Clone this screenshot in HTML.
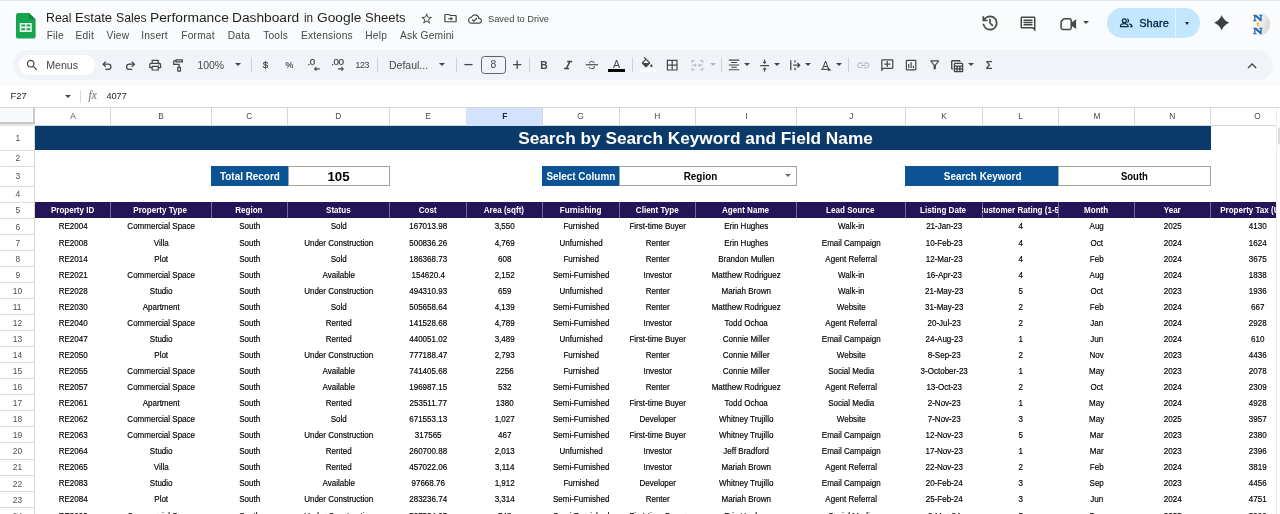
<!DOCTYPE html>
<html><head><meta charset="utf-8"><title>Real Estate Sales Performance Dashboard in Google Sheets</title>
<style>
*{box-sizing:border-box;margin:0;padding:0}
html,body{width:1280px;height:514px;overflow:hidden;background:#fff}
body{font-family:"Liberation Sans",sans-serif;color:#1f1f1f;-webkit-font-smoothing:antialiased}
#app{will-change:transform;position:relative;width:1280px;height:514px;overflow:hidden;background:#fff}
.abs{position:absolute}
svg{position:absolute;overflow:visible}
/* ---- header ---- */
#hdr{position:absolute;left:0;top:0;width:1280px;height:86px;background:#f9fbfd}
#topline{position:absolute;left:0;top:0;width:1280px;height:1px;background:#e5e6e8}
#title{position:absolute;left:46.200px;top:9.300px;width:370px;height:17px;font-size:13.700px;line-height:17px;color:#1f1f1f;white-space:nowrap}
#title span{position:absolute;top:0;transform-origin:0 50%}
.menu{position:absolute;top:29.500px;font-size:10.200px;line-height:12px;color:#444746;white-space:nowrap;letter-spacing:.2px}
#saved{position:absolute;left:488px;top:12.800px;font-size:9.3px;line-height:12px;color:#444746;white-space:nowrap}
#share{position:absolute;left:1107px;top:8px;width:93px;height:30px;border-radius:15px;background:#c2e7ff}
#share .div{position:absolute;left:68px;top:0;width:1px;height:30px;background:#e3f3ff}
#share .t{position:absolute;left:32.200px;top:9.200px;font-size:11px;line-height:12px;font-weight:400;color:#0a2a47;-webkit-text-stroke:.35px #0a2a47;letter-spacing:.1px}
#avatar{position:absolute;left:1246.200px;top:11.800px;width:23.800px;height:23.800px;border-radius:50%;background:linear-gradient(100deg,#ffffff 0%,#fbfbfb 45%,#e4e4e4 75%,#d2d2d2 100%);overflow:hidden}
#avatar span{-webkit-text-stroke:.3px #1b68b3;position:absolute;left:0;width:23.800px;text-align:center;font-family:"Liberation Serif",serif;font-weight:700;color:#1b68b3}
/* ---- toolbar ---- */
#tb{position:absolute;left:13px;top:50px;width:1259.5px;height:29.5px;border-radius:15px;background:#f0f4f9}
#menus{position:absolute;left:18.5px;top:54.5px;width:76px;height:20.5px;border-radius:10.5px;background:#fff}
.tbt{position:absolute;font-size:10.5px;line-height:12px;color:#444746;white-space:nowrap}
.sep{position:absolute;top:57px;width:1px;height:15px;background:#cfd2d7}
.caret{position:absolute;width:0;height:0;border-left:3.4px solid transparent;border-right:3.4px solid transparent;border-top:3.6px solid #444746;margin-left:-.5px;margin-top:-.1px}
.caret.g{border-top-color:#b5b8bd}
#fsize{position:absolute;left:480.5px;top:55.5px;width:25.5px;height:18px;border:1px solid #5f6368;border-radius:3.5px;font-size:10.3px;line-height:16px;text-align:center;color:#444746}
/* ---- formula bar ---- */
#fb{position:absolute;left:0;top:85.800px;width:1280px;height:21.700px;background:#fff}
#fb .t{position:absolute;font-size:9.3px;line-height:12px;color:#1f1f1f;white-space:nowrap}
/* ---- grid ---- */
#grid{position:absolute;left:0;top:0;width:1280px;height:514px}
.colhdr-row{position:absolute;left:0;top:107px;width:1280px;height:18.5px;background:#fff;border-top:1px solid #d5d7da;border-bottom:1px solid #d5d7da}
.ch{position:absolute;top:108px;height:17px;line-height:16.2px;font-size:9.3px;color:#45494e;text-align:center}
.ch span{display:inline-block;transform:scaleX(.9);position:relative;left:.6px}
.vl{position:absolute;top:108px;width:1px;height:17px;background:#d5d7da}
.ch.sel{background:#d3e3fd;color:#1f2a3a;font-weight:700;height:18px;z-index:2}
.corner{position:absolute;left:0;top:108px;width:34.600px;height:16.100px;background:#f8f9fa;border-right:2.700px solid #c8c9ca;border-bottom:2.100px solid #c6c7c8}
.corner2{position:absolute;left:0;top:124.100px;width:34.600px;height:1.500px;background:#e6e7e8}
.rh{position:absolute;left:0;width:34.5px;font-size:9.800px;color:#4b5055;text-align:center}
.rh span{display:inline-block;transform:scaleX(.86)}
.hl{position:absolute;left:0;width:35px;height:1px;background:#dadcdf}
.rvl{position:absolute;left:34px;top:125px;width:1px;height:389px;background:#d5d7da}
.band{position:absolute;background:#0a3a69}
.bandtxt{position:absolute;color:#fff;font-weight:700;font-size:17.25px;text-align:center;white-space:nowrap}
.lab{position:absolute;top:165.7px;height:20.3px;line-height:20.35px;background:#0b5394;color:#fff;font-weight:700;font-size:10.9px;text-align:center;white-space:nowrap}
.box{position:absolute;top:165.7px;height:20.3px;line-height:18.35px;background:#fff;border:1px solid #a0a897;color:#000;font-weight:700;font-size:10.9px;text-align:center;white-space:nowrap}
.box.big{font-size:13.3px;line-height:19.05px}
.sx{display:inline-block;transform:scaleX(.91)}
.lab .sx{position:relative;left:.9px}
.dd{position:absolute;right:4.300px;top:7.300px;width:0;height:0;border-left:3.200px solid transparent;border-right:3.200px solid transparent;border-top:3.500px solid #6b6f74}
.thead{position:absolute;background:#241458}
.th{position:absolute;top:202px;height:16px;line-height:16.53px;color:#fff;font-weight:700;font-size:8.75px;overflow:hidden;white-space:nowrap;display:flex;justify-content:center}
.tvl{position:absolute;top:202.300px;width:1px;height:15.700px;background:rgba(255,255,255,.36)}
.th span{flex:none;transform:scaleX(.92)}
.td{position:absolute;height:16px;line-height:17.25px;color:#000;font-size:9.3px;transform:translateX(.7px) scaleX(.862);-webkit-text-stroke:.18px #000;text-align:center;white-space:nowrap;overflow:visible}
.vscroll{position:absolute;left:1275.500px;top:108px;width:4.500px;height:406px;background:#fff;border-left:1px solid #e9ebed}
.vscroll .thumb{position:absolute;left:1.400px;top:19px;width:6px;height:17.500px;border-radius:3px;background:#dadce0}

</style></head><body>
<div id="app">
<div id="hdr">
<div id="topline"></div>
<!-- sheets logo -->
<svg style="left:16.300px;top:12.700px" width="19.600" height="25.600" viewBox="0 0 19.600 25.600">
<path d="M2.200 0 H13 L19.600 6.600 V23.400 a2.200 2.200 0 0 1 -2.200 2.200 H2.200 a2.200 2.200 0 0 1 -2.200 -2.200 V2.200 a2.200 2.200 0 0 1 2.200 -2.200z" fill="#17a44f"/>
<path d="M13 0 L19.600 6.600 H14.600 a1.600 1.600 0 0 1 -1.600 -1.600z" fill="#0c8a40"/>
<path d="M3.700 10 h12.100 v8.900 h-12.100z M5.300 11.600 v2 h3.700 v-2z M10.500 11.600 v2 h3.800 v-2z M5.300 15.200 v2 h3.700 v-2z M10.500 15.200 v2 h3.800 v-2z" fill="#e9f9ee" fill-rule="evenodd"/>
</svg>
<div id="title"><span style="left:-0.40px;transform:scaleX(0.904)">Real</span><span style="left:28.44px;transform:scaleX(0.957)">Estate</span><span style="left:69.50px;transform:scaleX(0.898)">Sales</span><span style="left:103.79px;transform:scaleX(1.006)">Performance</span><span style="left:186.00px;transform:scaleX(1.004)">Dashboard</span><span style="left:257.50px;transform:scaleX(0.856)">in</span><span style="left:270.80px;transform:scaleX(1.006)">Google</span><span style="left:319.10px;transform:scaleX(0.954)">Sheets</span></div>
<!-- star -->
<svg style="left:420px;top:12px" width="13.300" height="13.300" viewBox="0 0 24 24"><path fill="#444746" d="M22 9.240l-7.190-.620L12 2 9.190 8.630 2 9.240l5.460 4.730L5.820 21 12 17.270 18.180 21l-1.630-7.030L22 9.240zM12 15.400l-3.760 2.270 1-4.280-3.320-2.880 4.380-.380L12 6.100l1.710 4.040 4.380.380-3.320 2.880 1 4.280L12 15.400z"/></svg>
<!-- folder move -->
<svg style="left:443px;top:12.150px" width="15" height="12.300" viewBox="0 0 24 24" preserveAspectRatio="none"><path fill="#444746" d="M20 6h-8l-2-2H4c-1.100 0-2 .900-2 2v12c0 1.100.900 2 2 2h16c1.100 0 2-.900 2-2V8c0-1.100-.900-2-2-2zm0 12H4V6h5.170l2 2H20v10zm-7.990-1L16 13l-3.990-4v3H8v2h4.010v3z"/></svg>
<!-- cloud done -->
<svg style="left:468px;top:11.7px" width="14" height="14" viewBox="0 0 24 24"><path fill="#444746" d="M19.350 10.040C18.670 6.590 15.640 4 12 4 9.110 4 6.600 5.640 5.350 8.040 2.340 8.360 0 10.910 0 14c0 3.310 2.690 6 6 6h13c2.760 0 5-2.240 5-5 0-2.640-2.050-4.780-4.650-4.960zM19 18H6c-2.210 0-4-1.790-4-4 0-2.050 1.530-3.760 3.560-3.970l1.070-.110.500-.950C8.080 7.140 9.940 6 12 6c2.620 0 4.880 1.860 5.390 4.430l.300 1.500 1.530.110c1.560.100 2.780 1.410 2.780 2.960 0 1.650-1.350 3-3 3zm-9-3.820l-2.090-2.090L6.500 13.500 10 17l6.010-6.010-1.410-1.410z"/></svg>
<div id="saved">Saved to Drive</div>
<!-- menus -->
<div class="menu" style="left:46.7px">File</div>
<div class="menu" style="left:75.6px">Edit</div>
<div class="menu" style="left:106.6px">View</div>
<div class="menu" style="left:141.2px">Insert</div>
<div class="menu" style="left:181.3px">Format</div>
<div class="menu" style="left:227.8px">Data</div>
<div class="menu" style="left:263.2px">Tools</div>
<div class="menu" style="left:301px">Extensions</div>
<div class="menu" style="left:365.3px">Help</div>
<div class="menu" style="left:400px">Ask Gemini</div>
<!-- history -->
<svg style="left:980.200px;top:12.800px" width="20" height="20" viewBox="0 -960 960 960"><path fill="#444746" d="M480-120q-138 0-240.500-91.500T122-440h82q14 104 92.500 172T480-200q117 0 198.500-81.500T760-480q0-117-81.500-198.500T480-760q-69 0-129 32t-101 88h110v80H120v-240h80v94q51-64 124.500-99T480-840q75 0 140.500 28.500t114 77q48.500 48.500 77 114T840-480q0 75-28.500 140.500t-77 114q-48.500 48.500-114 77T480-120Zm112-192L440-464v-216h80v184l128 128-56 56Z"/></svg>
<!-- comment -->
<svg style="left:1018.700px;top:14.500px" width="18" height="18" viewBox="0 0 24 24"><path fill="#444746" d="M21.990 4c0-1.100-.890-2-1.990-2H4c-1.100 0-2 .900-2 2v12c0 1.100.900 2 2 2h14l4 4-.010-18zM20 4v13.170L18.830 16H4V4h16zM6 12h12v2H6zm0-3h12v2H6zm0-3h12v2H6z"/></svg>
<!-- video -->
<svg style="left:1058px;top:16px" width="20" height="16" viewBox="1058 16 20 16"><path d="M1063.900 18.800 H1069.500 a1.700 1.700 0 0 1 1.700 1.700 V27.700 a1.700 1.700 0 0 1 -1.700 1.700 H1062.800 a1.700 1.700 0 0 1 -1.700 -1.700 V21.600z" fill="none" stroke="#444746" stroke-width="1.500" stroke-linejoin="round"/><path d="M1071.600 22.400 L1076.100 19.300 V28.900 L1071.600 25.800z" fill="#444746"/></svg>
<div class="caret" style="left:1083.900px;top:21.300px;border-left-width:3px;border-right-width:3px;border-top-width:3.300px"></div>
<!-- share -->
<div id="share"><div class="div"></div>
<svg style="left:11px;top:8px" width="16" height="14" viewBox="1118 16 16 14"><g fill="none" stroke="#0a2a47" stroke-width="1.250"><circle cx="1124.300" cy="20.700" r="1.950"/><path d="M1120.500 26.700 V25.900 C1120.500 24.200 1123 23.500 1124.300 23.500 S1128.100 24.200 1128.100 25.900 V26.700z" stroke-linejoin="round"/><path d="M1127.300 18.900 A1.950 1.950 0 0 1 1127.300 22.500"/><path d="M1129.300 23.800 C1130.700 24.200 1131.900 24.900 1131.900 25.900 V26.700 H1130.200"/></g></svg>
<div class="t">Share</div>
<div class="caret" style="left:78.700px;top:14.300px;border-top-color:#0a2a47;border-left-width:2.900px;border-right-width:2.900px;border-top-width:3.200px"></div>
</div>
<!-- gemini spark -->
<svg style="left:1213.800px;top:15.400px" width="15.400" height="15.400" viewBox="0 0 24 24"><path fill="#3c4043" d="M12 0 C13.500 5 19 10.500 24 12 C19 13.500 13.500 19 12 24 C10.500 19 5 13.500 0 12 C5 10.500 10.500 5 12 0Z"/></svg>
<!-- avatar -->
<div id="avatar"><span style="top:1.800px;font-size:8.600px;line-height:9px;transform:scaleX(1.550)">N</span><span style="top:9px;font-size:6px;line-height:6px;color:#f4b400;-webkit-text-stroke:.3px #f4b400;transform:scaleX(1.300)">t</span><span style="top:14.800px;font-size:8.600px;line-height:9px;transform:scaleX(1.550)">N</span></div>
</div>

<div id="tb"></div>
<div id="menus"></div>
<!-- search -->
<svg style="left:24.9px;top:58.3px" width="14.4" height="14.4" viewBox="0 0 24 24"><path fill="#444746" d="M15.5 14h-.79l-.28-.27C15.41 12.59 16 11.11 16 9.5 16 5.91 13.09 3 9.5 3S3 5.91 3 9.5 5.91 16 9.5 16c1.61 0 3.09-.59 4.23-1.57l.27.28v.79l5 4.99L20.49 19l-4.990-5zm-6 0C7.01 14 5 11.99 5 9.500S7.01 5 9.5 5 14 7.01 14 9.500 11.99 14 9.500 14z"/></svg>
<div class="tbt" style="left:46.2px;top:58.9px;font-size:10.600px">Menus</div>
<!-- undo / redo -->
<svg style="left:100px;top:58px" width="16" height="14" viewBox="100 58 16 14"><path d="M105.700 61.600 L103.100 64.200 L105.700 66.800 M103.300 64.200 H108.300 A2.600 2.600 0 0 1 108.300 69.400 H105.200" fill="none" stroke="#444746" stroke-width="1.250" stroke-linejoin="miter"/></svg>
<svg style="left:122px;top:58px" width="16" height="14" viewBox="122 58 16 14"><path d="M131.800 61.600 L134.400 64.200 L131.800 66.800 M134.200 64.200 H129.200 A2.600 2.600 0 0 0 129.200 69.400 H132.300" fill="none" stroke="#444746" stroke-width="1.250" stroke-linejoin="miter"/></svg>
<!-- print -->
<svg style="left:147.700px;top:58.300px" width="14.400" height="14.400" viewBox="0 0 24 24"><path fill="#444746" d="M19 8h-1V3H6v5H5c-1.660 0-3 1.340-3 3v6h4v4h12v-4h4v-6c0-1.660-1.340-3-3-3zM8 5h8v3H8V5zm8 14H8v-4h8v4zm2-4v-2H6v2H4v-4c0-.550.450-1 1-1h14c.550 0 1 .450 1 1v4h-2z"/><circle cx="18" cy="11.500" r="1" fill="#444746"/></svg>
<!-- paint format -->
<svg style="left:170px;top:56px" width="16" height="18" viewBox="170 56 16 18"><path d="M176 59.900 H182.400 V61.900 H176z M175.600 60.900 H173.700 V64.400 H179.100 V67.300 M177.800 67.400 H180.400 V71.100 H177.800z" fill="none" stroke="#444746" stroke-width="1.250" stroke-linejoin="round"/></svg>
<div class="tbt" style="left:197.400px;top:59.900px;font-size:10.450px">100%</div>
<div class="caret" style="left:235.400px;top:63.300px"></div>
<div class="sep" style="left:251px"></div>
<div class="tbt" style="left:262.800px;top:58.800px;font-size:9.800px;-webkit-text-stroke:.25px #444746">$</div>
<div class="tbt" style="left:285.300px;top:58.700px;font-size:9.800px;-webkit-text-stroke:.2px #444746;transform:scaleX(.9)">%</div>
<!-- .0 <- -->
<div class="tbt" style="left:307.400px;top:56.400px;font-size:9.800px;letter-spacing:-.3px;-webkit-text-stroke:.25px #444746">.0</div>
<svg style="left:313px;top:66px" width="8" height="6" viewBox="313 66 8 6"><path d="M319.800 68.900 H314.600 M316.400 67.100 L314.600 68.900 L316.400 70.700" fill="none" stroke="#444746" stroke-width="1.100"/></svg>
<!-- .00 -> -->
<div class="tbt" style="left:331.200px;top:56.400px;font-size:9.800px;letter-spacing:-.4px;-webkit-text-stroke:.25px #444746">.00</div>
<svg style="left:337px;top:66px" width="8" height="6" viewBox="337 66 8 6"><path d="M338 68.900 H343.200 M341.400 67.100 L343.200 68.900 L341.400 70.700" fill="none" stroke="#444746" stroke-width="1.100"/></svg>
<div class="tbt" style="left:355.300px;top:59.100px;font-size:9.400px;letter-spacing:-.75px">123</div>
<div class="sep" style="left:377px"></div>
<div class="tbt" style="left:389px;top:58.900px;font-size:10.500px">Defaul...</div>
<div class="caret" style="left:439.200px;top:63.300px"></div>
<div class="sep" style="left:456px"></div>
<!-- minus / size / plus -->
<svg style="left:462px;top:58px" width="14" height="14" viewBox="462 58 14 14"><path d="M464.400 64.600 H472.500" stroke="#444746" stroke-width="1.300" fill="none"/></svg>
<div id="fsize">8</div>
<svg style="left:510px;top:58px" width="14" height="14" viewBox="510 58 14 14"><path d="M513.100 64.600 H521.300 M517.200 60.500 V68.700" stroke="#444746" stroke-width="1.300" fill="none"/></svg>
<div class="sep" style="left:529px"></div>
<!-- B I S A -->
<div class="tbt" style="left:540.300px;top:59.700px;font-size:10.300px;font-weight:700">B</div>
<svg style="left:562px;top:58px" width="14" height="14" viewBox="562 58 14 14"><path d="M567.200 61.600 H572.200 M564 68.400 H569 M569.900 61.600 L566.400 68.400" stroke="#444746" stroke-width="1.500" fill="none"/></svg>
<div class="tbt" style="left:588.300px;top:58.800px;font-size:10.600px">S</div>
<svg style="left:584px;top:58px" width="16" height="14" viewBox="584 58 16 14"><rect x="585" y="63.300" width="14" height="2.900" fill="#f0f4f9"/><path d="M585.800 64.750 H598" stroke="#444746" stroke-width="1.150" fill="none"/></svg>
<div class="tbt" style="left:612.900px;top:57.500px;font-size:10.600px">A</div>
<div class="abs" style="left:608.100px;top:69px;width:17px;height:2.700px;background:#000"></div>
<div class="sep" style="left:631.500px"></div>
<!-- fill colour -->
<svg style="left:639.500px;top:56.800px" width="14.400" height="14.400" viewBox="0 0 24 24"><path fill="#444746" d="M16.560 8.940L7.620 0 6.210 1.410l2.380 2.380-5.150 5.150c-.590.590-.590 1.540 0 2.120l5.500 5.500c.290.290.680.440 1.060.440s.770-.150 1.060-.440l5.500-5.500c.590-.580.590-1.530 0-2.120zM5.210 10L10 5.210 14.790 10H5.210zM19 11.500s-2 2.170-2 3.500c0 1.100.900 2 2 2s2-.900 2-2c0-1.330-2-3.500-2-3.500z"/></svg>
<div class="abs" style="left:640px;top:68.500px;width:16px;height:3.100px;background:#fff"></div>
<!-- borders -->
<svg style="left:665.200px;top:58.200px" width="14.400" height="14.400" viewBox="0 0 24 24"><path fill="#444746" d="M3 3v18h18V3H3zm8 16H5v-6h6v6zm0-8H5V5h6v6zm8 8h-6v-6h6v6zm0-8h-6V5h6v6z"/></svg>
<!-- merge (disabled) -->
<svg style="left:690px;top:58px" width="16" height="14" viewBox="690 58 16 14"><path d="M691.900 63 V60.600 H694.600 M700 60.600 H702.700 V63 M702.700 67.400 V69.800 H700 M694.600 69.800 H691.900 V67.400 M692.200 65.200 H696 M694.600 63.800 L696 65.200 L694.600 66.600 M702.400 65.200 H698.600 M700 63.800 L698.600 65.200 L700 66.600" fill="none" stroke="#b9bcc1" stroke-width="1.150"/></svg>
<div class="caret g" style="left:710.300px;top:63.300px"></div>
<div class="sep" style="left:720.500px"></div>
<!-- h-align -->
<svg style="left:727px;top:58px" width="14" height="14" viewBox="727 58 14 14"><path d="M728.800 60.100 H739.200 M731.100 62.500 H736.900 M728.800 64.900 H739.200 M731.100 67.300 H736.900 M728.800 69.700 H739.200" stroke="#444746" stroke-width="1.050" fill="none"/></svg>
<div class="caret" style="left:744.500px;top:63.300px"></div>
<!-- v-align -->
<svg style="left:757.800px;top:58.900px" width="13.200" height="13.200" viewBox="0 0 24 24"><path fill="#444746" d="M8 19h3v4h2v-4h3l-4-4-4 4zm8-14h-3V1h-2v4H8l4 4 4-4zM4 11v2h16v-2H4z"/></svg>
<div class="caret" style="left:774.900px;top:63.300px"></div>
<!-- wrap / overflow -->
<svg style="left:788px;top:58px" width="14" height="14" viewBox="788 58 14 14"><path d="M790.800 60.200 V70.200 M795 60.200 V62.600 M795 67.800 V70.200 M793.200 65.200 H799.600 M797.400 62.900 L799.700 65.200 L797.400 67.500" stroke="#444746" stroke-width="1.250" fill="none"/></svg>
<div class="caret" style="left:805.900px;top:63.300px"></div>
<!-- rotate -->
<div class="tbt" style="left:822.100px;top:58.600px;font-size:10.600px">A</div>
<svg style="left:819px;top:66px" width="14" height="7" viewBox="819 66 14 7"><path d="M821 69.300 H829.300" stroke="#444746" stroke-width="1.050" fill="none"/><path d="M828.300 67.600 L831.300 70.300 L827.700 71z" fill="#444746"/></svg>
<div class="caret" style="left:836.700px;top:63.300px"></div>
<div class="sep" style="left:848.300px"></div>
<!-- link (disabled) -->
<svg style="left:855.900px;top:57.900px" width="14.600" height="14.600" viewBox="0 0 24 24"><path fill="#b9bcc1" d="M3.900 12c0-1.710 1.390-3.100 3.100-3.100h4V7H7c-2.760 0-5 2.240-5 5s2.240 5 5 5h4v-1.900H7c-1.710 0-3.100-1.390-3.100-3.100zM8 13h8v-2H8v2zm9-6h-4v1.900h4c1.710 0 3.100 1.390 3.100 3.100s-1.390 3.100-3.100 3.100h-4V17h4c2.760 0 5-2.240 5-5s-2.240-5-5-5z"/></svg>
<!-- add comment (tail bottom-left) -->
<svg style="left:879.700px;top:58.200px" width="14.600" height="14.600" viewBox="0 0 24 24"><g transform="translate(24 0) scale(-1 1)"><path fill="#444746" d="M22 4c0-1.100-.900-2-2-2H4c-1.100 0-2 .900-2 2v12c0 1.100.900 2 2 2h14l4 4V4zm-2 13.170L18.830 16H4V4h16v13.170zM13 5h-2v4H7v2h4v4h2v-4h4V9h-4z"/></g></svg>
<!-- chart -->
<svg style="left:903.700px;top:58.200px" width="14.200" height="14.200" viewBox="0 0 24 24"><path fill="#444746" d="M9 17H7v-7h2v7zm4 0h-2V7h2v10zm4 0h-2v-4h2v4zm2 2H5V5h14v14zm0-16H5c-1.100 0-2 .900-2 2v14c0 1.100.900 2 2 2h14c1.100 0 2-.900 2-2V5c0-1.100-.900-2-2-2z"/></svg>
<!-- filter -->
<svg style="left:928px;top:58.450px" width="13.500" height="13.500" viewBox="0 0 24 24"><path fill="#444746" d="M7 6h10l-5.010 6.300L7 6zm-2.750-.390C6.270 8.200 10 13 10 13v6c0 .550.450 1 1 1h2c.550 0 1-.450 1-1v-6s3.720-4.800 5.740-7.390c.510-.660.040-1.610-.790-1.610H5.040c-.830 0-1.300.950-.790 1.610z"/></svg>
<!-- table view -->
<svg style="left:948.800px;top:57.500px" width="16.300" height="16.300" viewBox="0 0 24 24"><path fill="#444746" d="M19 7H9c-1.100 0-2 .900-2 2v10c0 1.100.900 2 2 2h10c1.100 0 2-.900 2-2V9c0-1.100-.900-2-2-2zm0 2v2H9V9h10zm-6 6v-2h2v2h-2zm2 2v2h-2v-2h2zm-4-2H9v-2h2v2zm6-2h2v2h-2v-2zm-8 4h2v2H9v-2zm8 2v-2h2v2h-2zM6 17H5c-1.100 0-2-.900-2-2V5c0-1.100.900-2 2-2h10c1.100 0 2 .900 2 2v1h-2V5H5v10h1v2z"/></svg>
<div class="caret" style="left:968.600px;top:63.300px"></div>
<!-- sigma -->
<div class="tbt" style="left:985.800px;top:58.700px;font-size:11px;font-weight:700">&#931;</div>
<!-- collapse chevron -->
<svg style="left:1245px;top:60px" width="14" height="12" viewBox="1245 60 14 12"><path d="M1248 68.100 L1252.100 64 L1256.200 68.100" stroke="#444746" stroke-width="1.350" fill="none"/></svg>

<div id="fb">
<div class="t" style="left:10.600px;top:4px;font-size:9.400px">F27</div>
<div class="caret" style="left:65.800px;top:9px;border-left-width:3px;border-right-width:3px;border-top-width:3.300px"></div>
<div class="abs" style="left:79.500px;top:4.700px;width:1px;height:12.500px;background:#d8dade"></div>
<div class="t" style="left:88.600px;top:2.800px;font-family:'Liberation Serif',serif;font-style:italic;font-size:11.500px;color:#80868b;-webkit-text-stroke:.2px #80868b">fx</div>
<div class="t" style="left:106.400px;top:3.900px;font-size:9.200px">4077</div>
</div>

<div id="grid">
<div class="colhdr-row"></div>
<div class="ch" style="left:35px;width:75px"><span>A</span></div>
<div class="vl" style="left:109.5px"></div>
<div class="ch" style="left:110px;width:101px"><span>B</span></div>
<div class="vl" style="left:210.5px"></div>
<div class="ch" style="left:211px;width:76px"><span>C</span></div>
<div class="vl" style="left:286.5px"></div>
<div class="ch" style="left:287px;width:102px"><span>D</span></div>
<div class="vl" style="left:388.5px"></div>
<div class="ch" style="left:389px;width:77px"><span>E</span></div>
<div class="vl" style="left:465.5px"></div>
<div class="ch sel" style="left:466px;width:76px"><span>F</span></div>
<div class="vl" style="left:541.5px"></div>
<div class="ch" style="left:542px;width:77px"><span>G</span></div>
<div class="vl" style="left:618.5px"></div>
<div class="ch" style="left:619px;width:76px"><span>H</span></div>
<div class="vl" style="left:694.5px"></div>
<div class="ch" style="left:695px;width:101px"><span>I</span></div>
<div class="vl" style="left:795.5px"></div>
<div class="ch" style="left:796px;width:109px"><span>J</span></div>
<div class="vl" style="left:904.5px"></div>
<div class="ch" style="left:905px;width:77px"><span>K</span></div>
<div class="vl" style="left:981.5px"></div>
<div class="ch" style="left:982px;width:76px"><span>L</span></div>
<div class="vl" style="left:1057.5px"></div>
<div class="ch" style="left:1058px;width:76px"><span>M</span></div>
<div class="vl" style="left:1133.5px"></div>
<div class="ch" style="left:1134px;width:76px"><span>N</span></div>
<div class="vl" style="left:1209.5px"></div>
<div class="ch" style="left:1210px;width:94px"><span>O</span></div>
<div class="vl" style="left:1303.5px"></div>
<div class="rvl"></div>
<div class="corner"></div><div class="corner2"></div>
<div class="rh" style="top:125.70px;height:24.00px;line-height:24.00px"><span>1</span></div>
<div class="hl" style="top:149.60px"></div>
<div class="rh" style="top:149.70px;height:16.00px;line-height:16.00px"><span>2</span></div>
<div class="hl" style="top:165.60px"></div>
<div class="rh" style="top:165.70px;height:20.00px;line-height:20.00px"><span>3</span></div>
<div class="hl" style="top:185.60px"></div>
<div class="rh" style="top:185.70px;height:16.00px;line-height:16.00px"><span>4</span></div>
<div class="hl" style="top:201.60px"></div>
<div class="rh" style="top:201.70px;height:16.05px;line-height:16.05px"><span>5</span></div>
<div class="hl" style="top:217.65px"></div>
<div class="rh" style="top:218.55px;height:16.06px;line-height:16.06px"><span>6</span></div>
<div class="hl" style="top:233.71px"></div>
<div class="rh" style="top:234.61px;height:16.06px;line-height:16.06px"><span>7</span></div>
<div class="hl" style="top:249.77px"></div>
<div class="rh" style="top:250.67px;height:16.06px;line-height:16.06px"><span>8</span></div>
<div class="hl" style="top:265.83px"></div>
<div class="rh" style="top:266.73px;height:16.06px;line-height:16.06px"><span>9</span></div>
<div class="hl" style="top:281.89px"></div>
<div class="rh" style="top:282.79px;height:16.06px;line-height:16.06px"><span>10</span></div>
<div class="hl" style="top:297.95px"></div>
<div class="rh" style="top:298.85px;height:16.06px;line-height:16.06px"><span>11</span></div>
<div class="hl" style="top:314.01px"></div>
<div class="rh" style="top:314.91px;height:16.06px;line-height:16.06px"><span>12</span></div>
<div class="hl" style="top:330.07px"></div>
<div class="rh" style="top:330.97px;height:16.06px;line-height:16.06px"><span>13</span></div>
<div class="hl" style="top:346.13px"></div>
<div class="rh" style="top:347.03px;height:16.06px;line-height:16.06px"><span>14</span></div>
<div class="hl" style="top:362.19px"></div>
<div class="rh" style="top:363.09px;height:16.06px;line-height:16.06px"><span>15</span></div>
<div class="hl" style="top:378.25px"></div>
<div class="rh" style="top:379.15px;height:16.06px;line-height:16.06px"><span>16</span></div>
<div class="hl" style="top:394.31px"></div>
<div class="rh" style="top:395.21px;height:16.06px;line-height:16.06px"><span>17</span></div>
<div class="hl" style="top:410.37px"></div>
<div class="rh" style="top:411.27px;height:16.06px;line-height:16.06px"><span>18</span></div>
<div class="hl" style="top:426.43px"></div>
<div class="rh" style="top:427.33px;height:16.06px;line-height:16.06px"><span>19</span></div>
<div class="hl" style="top:442.49px"></div>
<div class="rh" style="top:443.39px;height:16.06px;line-height:16.06px"><span>20</span></div>
<div class="hl" style="top:458.55px"></div>
<div class="rh" style="top:459.45px;height:16.06px;line-height:16.06px"><span>21</span></div>
<div class="hl" style="top:474.61px"></div>
<div class="rh" style="top:475.51px;height:16.06px;line-height:16.06px"><span>22</span></div>
<div class="hl" style="top:490.67px"></div>
<div class="rh" style="top:491.57px;height:16.06px;line-height:16.06px"><span>23</span></div>
<div class="hl" style="top:506.73px"></div>
<div class="rh" style="top:507.63px;height:16.06px;line-height:16.06px"><span>24</span></div>
<div class="hl" style="top:522.79px"></div>
<div class="band" style="left:35px;top:126px;width:1175.5px;height:24px"></div>
<div class="bandtxt" style="left:395.5px;top:126px;width:600px;height:24px;line-height:24px">Search by Search Keyword and Field Name</div>
<div class="lab" style="left:211px;width:76.5px"><span class="sx">Total Record</span></div>
<div class="box big" style="left:287.5px;width:102px">105</div>
<div class="lab" style="left:542px;width:75px"><span class="sx">Select Column</span></div>
<div class="lab" style="left:616px;width:3px"></div>
<div class="box" style="left:619px;width:177.5px"><span class="sx" style="position:relative;left:-7.3px">Region</span><span class="dd"></span></div>
<div class="lab" style="left:905.3px;width:152.70000000000005px"><span class="sx">Search Keyword</span></div>
<div class="box" style="left:1058px;width:153px"><span class="sx" style="transform:scaleX(.875);position:relative;left:.4px">South</span></div>
<div class="thead" style="left:35px;top:202px;width:1241px;height:16px"></div>
<div class="th" style="left:35px;width:75px"><span>Property ID</span></div>
<div class="tvl" style="left:110px"></div>
<div class="th" style="left:110px;width:101px"><span>Property Type</span></div>
<div class="tvl" style="left:211px"></div>
<div class="th" style="left:211px;width:76px"><span>Region</span></div>
<div class="tvl" style="left:287px"></div>
<div class="th" style="left:287px;width:102px"><span>Status</span></div>
<div class="tvl" style="left:389px"></div>
<div class="th" style="left:389px;width:77px"><span>Cost</span></div>
<div class="tvl" style="left:466px"></div>
<div class="th" style="left:466px;width:76px"><span>Area (sqft)</span></div>
<div class="tvl" style="left:542px"></div>
<div class="th" style="left:542px;width:77px"><span>Furnishing</span></div>
<div class="tvl" style="left:619px"></div>
<div class="th" style="left:619px;width:76px"><span>Client Type</span></div>
<div class="tvl" style="left:695px"></div>
<div class="th" style="left:695px;width:101px"><span>Agent Name</span></div>
<div class="tvl" style="left:796px"></div>
<div class="th" style="left:796px;width:109px"><span>Lead Source</span></div>
<div class="tvl" style="left:905px"></div>
<div class="th" style="left:905px;width:77px"><span>Listing Date</span></div>
<div class="tvl" style="left:982px"></div>
<div class="th" style="left:982px;width:76px"><span>Customer Rating (1-5)</span></div>
<div class="tvl" style="left:1058px"></div>
<div class="th" style="left:1058px;width:76px"><span>Month</span></div>
<div class="tvl" style="left:1134px"></div>
<div class="th" style="left:1134px;width:76px"><span>Year</span></div>
<div class="tvl" style="left:1210px"></div>
<div class="th" style="left:1210px;width:94px"><span>Property Tax (USD)</span></div>
<div class="td" style="left:35px;width:75px;top:218.45px">RE2004</div>
<div class="td" style="left:110px;width:101px;top:218.45px">Commercial Space</div>
<div class="td" style="left:211px;width:76px;top:218.45px">South</div>
<div class="td" style="left:287px;width:102px;top:218.45px">Sold</div>
<div class="td" style="left:389px;width:77px;top:218.45px">167013.98</div>
<div class="td" style="left:466px;width:76px;top:218.45px">3,550</div>
<div class="td" style="left:542px;width:77px;top:218.45px">Furnished</div>
<div class="td" style="left:619px;width:76px;top:218.45px">First-time Buyer</div>
<div class="td" style="left:695px;width:101px;top:218.45px">Erin Hughes</div>
<div class="td" style="left:796px;width:109px;top:218.45px">Walk-in</div>
<div class="td" style="left:905px;width:77px;top:218.45px">21-Jan-23</div>
<div class="td" style="left:982px;width:76px;top:218.45px">4</div>
<div class="td" style="left:1058px;width:76px;top:218.45px">Aug</div>
<div class="td" style="left:1134px;width:76px;top:218.45px">2025</div>
<div class="td" style="left:1210px;width:94px;top:218.45px">4130</div>
<div class="td" style="left:35px;width:75px;top:234.51px">RE2008</div>
<div class="td" style="left:110px;width:101px;top:234.51px">Villa</div>
<div class="td" style="left:211px;width:76px;top:234.51px">South</div>
<div class="td" style="left:287px;width:102px;top:234.51px">Under Construction</div>
<div class="td" style="left:389px;width:77px;top:234.51px">500836.26</div>
<div class="td" style="left:466px;width:76px;top:234.51px">4,769</div>
<div class="td" style="left:542px;width:77px;top:234.51px">Unfurnished</div>
<div class="td" style="left:619px;width:76px;top:234.51px">Renter</div>
<div class="td" style="left:695px;width:101px;top:234.51px">Erin Hughes</div>
<div class="td" style="left:796px;width:109px;top:234.51px">Email Campaign</div>
<div class="td" style="left:905px;width:77px;top:234.51px">10-Feb-23</div>
<div class="td" style="left:982px;width:76px;top:234.51px">4</div>
<div class="td" style="left:1058px;width:76px;top:234.51px">Oct</div>
<div class="td" style="left:1134px;width:76px;top:234.51px">2024</div>
<div class="td" style="left:1210px;width:94px;top:234.51px">1624</div>
<div class="td" style="left:35px;width:75px;top:250.57px">RE2014</div>
<div class="td" style="left:110px;width:101px;top:250.57px">Plot</div>
<div class="td" style="left:211px;width:76px;top:250.57px">South</div>
<div class="td" style="left:287px;width:102px;top:250.57px">Sold</div>
<div class="td" style="left:389px;width:77px;top:250.57px">186368.73</div>
<div class="td" style="left:466px;width:76px;top:250.57px">608</div>
<div class="td" style="left:542px;width:77px;top:250.57px">Furnished</div>
<div class="td" style="left:619px;width:76px;top:250.57px">Renter</div>
<div class="td" style="left:695px;width:101px;top:250.57px">Brandon Mullen</div>
<div class="td" style="left:796px;width:109px;top:250.57px">Agent Referral</div>
<div class="td" style="left:905px;width:77px;top:250.57px">12-Mar-23</div>
<div class="td" style="left:982px;width:76px;top:250.57px">4</div>
<div class="td" style="left:1058px;width:76px;top:250.57px">Feb</div>
<div class="td" style="left:1134px;width:76px;top:250.57px">2024</div>
<div class="td" style="left:1210px;width:94px;top:250.57px">3675</div>
<div class="td" style="left:35px;width:75px;top:266.63px">RE2021</div>
<div class="td" style="left:110px;width:101px;top:266.63px">Commercial Space</div>
<div class="td" style="left:211px;width:76px;top:266.63px">South</div>
<div class="td" style="left:287px;width:102px;top:266.63px">Available</div>
<div class="td" style="left:389px;width:77px;top:266.63px">154620.4</div>
<div class="td" style="left:466px;width:76px;top:266.63px">2,152</div>
<div class="td" style="left:542px;width:77px;top:266.63px">Semi-Furnished</div>
<div class="td" style="left:619px;width:76px;top:266.63px">Investor</div>
<div class="td" style="left:695px;width:101px;top:266.63px">Matthew Rodriguez</div>
<div class="td" style="left:796px;width:109px;top:266.63px">Walk-in</div>
<div class="td" style="left:905px;width:77px;top:266.63px">16-Apr-23</div>
<div class="td" style="left:982px;width:76px;top:266.63px">4</div>
<div class="td" style="left:1058px;width:76px;top:266.63px">Aug</div>
<div class="td" style="left:1134px;width:76px;top:266.63px">2024</div>
<div class="td" style="left:1210px;width:94px;top:266.63px">1838</div>
<div class="td" style="left:35px;width:75px;top:282.69px">RE2028</div>
<div class="td" style="left:110px;width:101px;top:282.69px">Studio</div>
<div class="td" style="left:211px;width:76px;top:282.69px">South</div>
<div class="td" style="left:287px;width:102px;top:282.69px">Under Construction</div>
<div class="td" style="left:389px;width:77px;top:282.69px">494310.93</div>
<div class="td" style="left:466px;width:76px;top:282.69px">659</div>
<div class="td" style="left:542px;width:77px;top:282.69px">Unfurnished</div>
<div class="td" style="left:619px;width:76px;top:282.69px">Renter</div>
<div class="td" style="left:695px;width:101px;top:282.69px">Mariah Brown</div>
<div class="td" style="left:796px;width:109px;top:282.69px">Walk-in</div>
<div class="td" style="left:905px;width:77px;top:282.69px">21-May-23</div>
<div class="td" style="left:982px;width:76px;top:282.69px">5</div>
<div class="td" style="left:1058px;width:76px;top:282.69px">Oct</div>
<div class="td" style="left:1134px;width:76px;top:282.69px">2023</div>
<div class="td" style="left:1210px;width:94px;top:282.69px">1936</div>
<div class="td" style="left:35px;width:75px;top:298.75px">RE2030</div>
<div class="td" style="left:110px;width:101px;top:298.75px">Apartment</div>
<div class="td" style="left:211px;width:76px;top:298.75px">South</div>
<div class="td" style="left:287px;width:102px;top:298.75px">Sold</div>
<div class="td" style="left:389px;width:77px;top:298.75px">505658.64</div>
<div class="td" style="left:466px;width:76px;top:298.75px">4,139</div>
<div class="td" style="left:542px;width:77px;top:298.75px">Semi-Furnished</div>
<div class="td" style="left:619px;width:76px;top:298.75px">Renter</div>
<div class="td" style="left:695px;width:101px;top:298.75px">Matthew Rodriguez</div>
<div class="td" style="left:796px;width:109px;top:298.75px">Website</div>
<div class="td" style="left:905px;width:77px;top:298.75px">31-May-23</div>
<div class="td" style="left:982px;width:76px;top:298.75px">2</div>
<div class="td" style="left:1058px;width:76px;top:298.75px">Feb</div>
<div class="td" style="left:1134px;width:76px;top:298.75px">2024</div>
<div class="td" style="left:1210px;width:94px;top:298.75px">667</div>
<div class="td" style="left:35px;width:75px;top:314.81px">RE2040</div>
<div class="td" style="left:110px;width:101px;top:314.81px">Commercial Space</div>
<div class="td" style="left:211px;width:76px;top:314.81px">South</div>
<div class="td" style="left:287px;width:102px;top:314.81px">Rented</div>
<div class="td" style="left:389px;width:77px;top:314.81px">141528.68</div>
<div class="td" style="left:466px;width:76px;top:314.81px">4,789</div>
<div class="td" style="left:542px;width:77px;top:314.81px">Semi-Furnished</div>
<div class="td" style="left:619px;width:76px;top:314.81px">Investor</div>
<div class="td" style="left:695px;width:101px;top:314.81px">Todd Ochoa</div>
<div class="td" style="left:796px;width:109px;top:314.81px">Agent Referral</div>
<div class="td" style="left:905px;width:77px;top:314.81px">20-Jul-23</div>
<div class="td" style="left:982px;width:76px;top:314.81px">2</div>
<div class="td" style="left:1058px;width:76px;top:314.81px">Jan</div>
<div class="td" style="left:1134px;width:76px;top:314.81px">2024</div>
<div class="td" style="left:1210px;width:94px;top:314.81px">2928</div>
<div class="td" style="left:35px;width:75px;top:330.87px">RE2047</div>
<div class="td" style="left:110px;width:101px;top:330.87px">Studio</div>
<div class="td" style="left:211px;width:76px;top:330.87px">South</div>
<div class="td" style="left:287px;width:102px;top:330.87px">Rented</div>
<div class="td" style="left:389px;width:77px;top:330.87px">440051.02</div>
<div class="td" style="left:466px;width:76px;top:330.87px">3,489</div>
<div class="td" style="left:542px;width:77px;top:330.87px">Unfurnished</div>
<div class="td" style="left:619px;width:76px;top:330.87px">First-time Buyer</div>
<div class="td" style="left:695px;width:101px;top:330.87px">Connie Miller</div>
<div class="td" style="left:796px;width:109px;top:330.87px">Email Campaign</div>
<div class="td" style="left:905px;width:77px;top:330.87px">24-Aug-23</div>
<div class="td" style="left:982px;width:76px;top:330.87px">1</div>
<div class="td" style="left:1058px;width:76px;top:330.87px">Jun</div>
<div class="td" style="left:1134px;width:76px;top:330.87px">2024</div>
<div class="td" style="left:1210px;width:94px;top:330.87px">610</div>
<div class="td" style="left:35px;width:75px;top:346.93px">RE2050</div>
<div class="td" style="left:110px;width:101px;top:346.93px">Plot</div>
<div class="td" style="left:211px;width:76px;top:346.93px">South</div>
<div class="td" style="left:287px;width:102px;top:346.93px">Under Construction</div>
<div class="td" style="left:389px;width:77px;top:346.93px">777188.47</div>
<div class="td" style="left:466px;width:76px;top:346.93px">2,793</div>
<div class="td" style="left:542px;width:77px;top:346.93px">Furnished</div>
<div class="td" style="left:619px;width:76px;top:346.93px">Renter</div>
<div class="td" style="left:695px;width:101px;top:346.93px">Connie Miller</div>
<div class="td" style="left:796px;width:109px;top:346.93px">Website</div>
<div class="td" style="left:905px;width:77px;top:346.93px">8-Sep-23</div>
<div class="td" style="left:982px;width:76px;top:346.93px">2</div>
<div class="td" style="left:1058px;width:76px;top:346.93px">Nov</div>
<div class="td" style="left:1134px;width:76px;top:346.93px">2023</div>
<div class="td" style="left:1210px;width:94px;top:346.93px">4436</div>
<div class="td" style="left:35px;width:75px;top:362.99px">RE2055</div>
<div class="td" style="left:110px;width:101px;top:362.99px">Commercial Space</div>
<div class="td" style="left:211px;width:76px;top:362.99px">South</div>
<div class="td" style="left:287px;width:102px;top:362.99px">Available</div>
<div class="td" style="left:389px;width:77px;top:362.99px">741405.68</div>
<div class="td" style="left:466px;width:76px;top:362.99px">2256</div>
<div class="td" style="left:542px;width:77px;top:362.99px">Furnished</div>
<div class="td" style="left:619px;width:76px;top:362.99px">Investor</div>
<div class="td" style="left:695px;width:101px;top:362.99px">Connie Miller</div>
<div class="td" style="left:796px;width:109px;top:362.99px">Social Media</div>
<div class="td" style="left:905px;width:77px;top:362.99px">3-October-23</div>
<div class="td" style="left:982px;width:76px;top:362.99px">1</div>
<div class="td" style="left:1058px;width:76px;top:362.99px">May</div>
<div class="td" style="left:1134px;width:76px;top:362.99px">2023</div>
<div class="td" style="left:1210px;width:94px;top:362.99px">2078</div>
<div class="td" style="left:35px;width:75px;top:379.05px">RE2057</div>
<div class="td" style="left:110px;width:101px;top:379.05px">Commercial Space</div>
<div class="td" style="left:211px;width:76px;top:379.05px">South</div>
<div class="td" style="left:287px;width:102px;top:379.05px">Available</div>
<div class="td" style="left:389px;width:77px;top:379.05px">196987.15</div>
<div class="td" style="left:466px;width:76px;top:379.05px">532</div>
<div class="td" style="left:542px;width:77px;top:379.05px">Semi-Furnished</div>
<div class="td" style="left:619px;width:76px;top:379.05px">Renter</div>
<div class="td" style="left:695px;width:101px;top:379.05px">Matthew Rodriguez</div>
<div class="td" style="left:796px;width:109px;top:379.05px">Agent Referral</div>
<div class="td" style="left:905px;width:77px;top:379.05px">13-Oct-23</div>
<div class="td" style="left:982px;width:76px;top:379.05px">2</div>
<div class="td" style="left:1058px;width:76px;top:379.05px">Oct</div>
<div class="td" style="left:1134px;width:76px;top:379.05px">2024</div>
<div class="td" style="left:1210px;width:94px;top:379.05px">2309</div>
<div class="td" style="left:35px;width:75px;top:395.11px">RE2061</div>
<div class="td" style="left:110px;width:101px;top:395.11px">Apartment</div>
<div class="td" style="left:211px;width:76px;top:395.11px">South</div>
<div class="td" style="left:287px;width:102px;top:395.11px">Rented</div>
<div class="td" style="left:389px;width:77px;top:395.11px">253511.77</div>
<div class="td" style="left:466px;width:76px;top:395.11px">1380</div>
<div class="td" style="left:542px;width:77px;top:395.11px">Semi-Furnished</div>
<div class="td" style="left:619px;width:76px;top:395.11px">First-time Buyer</div>
<div class="td" style="left:695px;width:101px;top:395.11px">Todd Ochoa</div>
<div class="td" style="left:796px;width:109px;top:395.11px">Social Media</div>
<div class="td" style="left:905px;width:77px;top:395.11px">2-Nov-23</div>
<div class="td" style="left:982px;width:76px;top:395.11px">1</div>
<div class="td" style="left:1058px;width:76px;top:395.11px">May</div>
<div class="td" style="left:1134px;width:76px;top:395.11px">2024</div>
<div class="td" style="left:1210px;width:94px;top:395.11px">4928</div>
<div class="td" style="left:35px;width:75px;top:411.17px">RE2062</div>
<div class="td" style="left:110px;width:101px;top:411.17px">Commercial Space</div>
<div class="td" style="left:211px;width:76px;top:411.17px">South</div>
<div class="td" style="left:287px;width:102px;top:411.17px">Sold</div>
<div class="td" style="left:389px;width:77px;top:411.17px">671553.13</div>
<div class="td" style="left:466px;width:76px;top:411.17px">1,027</div>
<div class="td" style="left:542px;width:77px;top:411.17px">Semi-Furnished</div>
<div class="td" style="left:619px;width:76px;top:411.17px">Developer</div>
<div class="td" style="left:695px;width:101px;top:411.17px">Whitney Trujillo</div>
<div class="td" style="left:796px;width:109px;top:411.17px">Website</div>
<div class="td" style="left:905px;width:77px;top:411.17px">7-Nov-23</div>
<div class="td" style="left:982px;width:76px;top:411.17px">3</div>
<div class="td" style="left:1058px;width:76px;top:411.17px">May</div>
<div class="td" style="left:1134px;width:76px;top:411.17px">2025</div>
<div class="td" style="left:1210px;width:94px;top:411.17px">3957</div>
<div class="td" style="left:35px;width:75px;top:427.23px">RE2063</div>
<div class="td" style="left:110px;width:101px;top:427.23px">Commercial Space</div>
<div class="td" style="left:211px;width:76px;top:427.23px">South</div>
<div class="td" style="left:287px;width:102px;top:427.23px">Under Construction</div>
<div class="td" style="left:389px;width:77px;top:427.23px">317565</div>
<div class="td" style="left:466px;width:76px;top:427.23px">467</div>
<div class="td" style="left:542px;width:77px;top:427.23px">Semi-Furnished</div>
<div class="td" style="left:619px;width:76px;top:427.23px">First-time Buyer</div>
<div class="td" style="left:695px;width:101px;top:427.23px">Whitney Trujillo</div>
<div class="td" style="left:796px;width:109px;top:427.23px">Email Campaign</div>
<div class="td" style="left:905px;width:77px;top:427.23px">12-Nov-23</div>
<div class="td" style="left:982px;width:76px;top:427.23px">5</div>
<div class="td" style="left:1058px;width:76px;top:427.23px">Mar</div>
<div class="td" style="left:1134px;width:76px;top:427.23px">2023</div>
<div class="td" style="left:1210px;width:94px;top:427.23px">2380</div>
<div class="td" style="left:35px;width:75px;top:443.29px">RE2064</div>
<div class="td" style="left:110px;width:101px;top:443.29px">Studio</div>
<div class="td" style="left:211px;width:76px;top:443.29px">South</div>
<div class="td" style="left:287px;width:102px;top:443.29px">Rented</div>
<div class="td" style="left:389px;width:77px;top:443.29px">260700.88</div>
<div class="td" style="left:466px;width:76px;top:443.29px">2,013</div>
<div class="td" style="left:542px;width:77px;top:443.29px">Unfurnished</div>
<div class="td" style="left:619px;width:76px;top:443.29px">Investor</div>
<div class="td" style="left:695px;width:101px;top:443.29px">Jeff Bradford</div>
<div class="td" style="left:796px;width:109px;top:443.29px">Email Campaign</div>
<div class="td" style="left:905px;width:77px;top:443.29px">17-Nov-23</div>
<div class="td" style="left:982px;width:76px;top:443.29px">1</div>
<div class="td" style="left:1058px;width:76px;top:443.29px">Mar</div>
<div class="td" style="left:1134px;width:76px;top:443.29px">2023</div>
<div class="td" style="left:1210px;width:94px;top:443.29px">2396</div>
<div class="td" style="left:35px;width:75px;top:459.35px">RE2065</div>
<div class="td" style="left:110px;width:101px;top:459.35px">Villa</div>
<div class="td" style="left:211px;width:76px;top:459.35px">South</div>
<div class="td" style="left:287px;width:102px;top:459.35px">Rented</div>
<div class="td" style="left:389px;width:77px;top:459.35px">457022.06</div>
<div class="td" style="left:466px;width:76px;top:459.35px">3,114</div>
<div class="td" style="left:542px;width:77px;top:459.35px">Semi-Furnished</div>
<div class="td" style="left:619px;width:76px;top:459.35px">Investor</div>
<div class="td" style="left:695px;width:101px;top:459.35px">Mariah Brown</div>
<div class="td" style="left:796px;width:109px;top:459.35px">Agent Referral</div>
<div class="td" style="left:905px;width:77px;top:459.35px">22-Nov-23</div>
<div class="td" style="left:982px;width:76px;top:459.35px">2</div>
<div class="td" style="left:1058px;width:76px;top:459.35px">Feb</div>
<div class="td" style="left:1134px;width:76px;top:459.35px">2024</div>
<div class="td" style="left:1210px;width:94px;top:459.35px">3819</div>
<div class="td" style="left:35px;width:75px;top:475.41px">RE2083</div>
<div class="td" style="left:110px;width:101px;top:475.41px">Studio</div>
<div class="td" style="left:211px;width:76px;top:475.41px">South</div>
<div class="td" style="left:287px;width:102px;top:475.41px">Available</div>
<div class="td" style="left:389px;width:77px;top:475.41px">97668.76</div>
<div class="td" style="left:466px;width:76px;top:475.41px">1,912</div>
<div class="td" style="left:542px;width:77px;top:475.41px">Furnished</div>
<div class="td" style="left:619px;width:76px;top:475.41px">Developer</div>
<div class="td" style="left:695px;width:101px;top:475.41px">Whitney Trujillo</div>
<div class="td" style="left:796px;width:109px;top:475.41px">Email Campaign</div>
<div class="td" style="left:905px;width:77px;top:475.41px">20-Feb-24</div>
<div class="td" style="left:982px;width:76px;top:475.41px">3</div>
<div class="td" style="left:1058px;width:76px;top:475.41px">Sep</div>
<div class="td" style="left:1134px;width:76px;top:475.41px">2023</div>
<div class="td" style="left:1210px;width:94px;top:475.41px">4456</div>
<div class="td" style="left:35px;width:75px;top:491.47px">RE2084</div>
<div class="td" style="left:110px;width:101px;top:491.47px">Plot</div>
<div class="td" style="left:211px;width:76px;top:491.47px">South</div>
<div class="td" style="left:287px;width:102px;top:491.47px">Under Construction</div>
<div class="td" style="left:389px;width:77px;top:491.47px">283236.74</div>
<div class="td" style="left:466px;width:76px;top:491.47px">3,314</div>
<div class="td" style="left:542px;width:77px;top:491.47px">Semi-Furnished</div>
<div class="td" style="left:619px;width:76px;top:491.47px">Renter</div>
<div class="td" style="left:695px;width:101px;top:491.47px">Mariah Brown</div>
<div class="td" style="left:796px;width:109px;top:491.47px">Agent Referral</div>
<div class="td" style="left:905px;width:77px;top:491.47px">25-Feb-24</div>
<div class="td" style="left:982px;width:76px;top:491.47px">3</div>
<div class="td" style="left:1058px;width:76px;top:491.47px">Jun</div>
<div class="td" style="left:1134px;width:76px;top:491.47px">2024</div>
<div class="td" style="left:1210px;width:94px;top:491.47px">4751</div>
<div class="td" style="left:35px;width:75px;top:507.53px">RE2090</div>
<div class="td" style="left:110px;width:101px;top:507.53px">Commercial Space</div>
<div class="td" style="left:211px;width:76px;top:507.53px">South</div>
<div class="td" style="left:287px;width:102px;top:507.53px">Under Construction</div>
<div class="td" style="left:389px;width:77px;top:507.53px">597364.93</div>
<div class="td" style="left:466px;width:76px;top:507.53px">748</div>
<div class="td" style="left:542px;width:77px;top:507.53px">Semi-Furnished</div>
<div class="td" style="left:619px;width:76px;top:507.53px">First-time Buyer</div>
<div class="td" style="left:695px;width:101px;top:507.53px">Erin Hughes</div>
<div class="td" style="left:796px;width:109px;top:507.53px">Social Media</div>
<div class="td" style="left:905px;width:77px;top:507.53px">2-Mar-24</div>
<div class="td" style="left:982px;width:76px;top:507.53px">5</div>
<div class="td" style="left:1058px;width:76px;top:507.53px">Dec</div>
<div class="td" style="left:1134px;width:76px;top:507.53px">2025</div>
<div class="td" style="left:1210px;width:94px;top:507.53px">3999</div>
<div class="vscroll"><div class="thumb"></div></div>
</div>
</div>
</body></html>
